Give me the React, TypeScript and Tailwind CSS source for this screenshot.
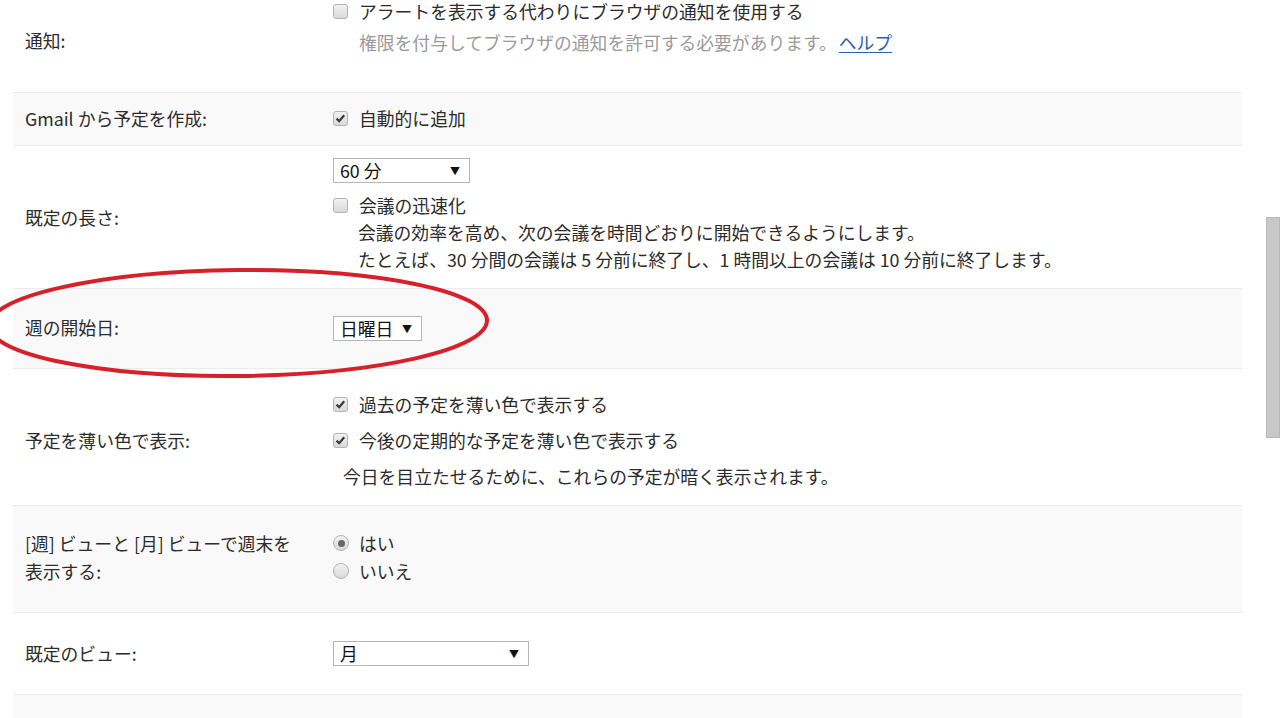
import React from 'react';

const font = { fontFamily: '"Noto Sans CJK JP", "Liberation Sans", sans-serif' };

const Checkbox: React.FC<{ checked?: boolean }> = ({ checked }) => (
  <span className="relative inline-block w-[15px] h-[15px] shrink-0 rounded-[3px] border border-[#b3b3b3] bg-gradient-to-b from-[#f2f2f2] to-[#d9d9d9]">
    {checked && (
      <svg viewBox="0 0 15 15" className="absolute -left-px -top-px w-[15px] h-[15px]">
        <path d="M3.6 7.6 L6.2 10.2 L11.2 4.2" fill="none" stroke="#3a3a3a" strokeWidth="2.2" />
      </svg>
    )}
  </span>
);

const Radio: React.FC<{ checked?: boolean }> = ({ checked }) => (
  <span className="inline-flex items-center justify-center w-[16px] h-[16px] shrink-0 rounded-full border border-[#b3b3b3] bg-gradient-to-b from-[#f2f2f2] to-[#d9d9d9]">
    {checked && <span className="w-[7px] h-[7px] rounded-full bg-[#666]" />}
  </span>
);

const Select: React.FC<{ label: string; width: string }> = ({ label, width }) => (
  <div className={`flex items-center justify-between h-[25px] ${width} border border-[#b5b5b5] bg-white pl-[6px] pr-[9px] text-[#111]`}>
    <span className="leading-[23px]">{label}</span>
    <span className="text-[10px] leading-none">▼</span>
  </div>
);

export default function App() {
  return (
    <div className="relative w-[1280px] h-[718px] overflow-hidden bg-white text-[17.8px] text-[#2b2b2b]" style={font}>
      <div className="ml-[13px] w-[1229px]">
        {/* 通知 */}
        <div className="flex h-[92px]">
          <div className="w-[320px] pl-[12px] pt-[27px] leading-[26px]">通知:</div>
          <div className="pt-px">
            <div className="flex items-center gap-[11px] leading-[20px]">
              <Checkbox />
              <span>アラートを表示する代わりにブラウザの通知を使用する</span>
            </div>
            <div className="mt-[8px] pl-[26px] leading-[26px] text-[#9a9a9a]">
              権限を付与してブラウザの通知を許可する必要があります。
              <a className="ml-[2px] text-[#2c5fae] underline underline-offset-2">ヘルプ</a>
            </div>
          </div>
        </div>

        {/* Gmail */}
        <div className="flex items-center h-[53px] border-t border-[#ebebeb] bg-[#f9f9f9]">
          <div className="w-[320px] pl-[12px] -mt-[2px]">Gmail から予定を作成:</div>
          <div className="flex items-center gap-[11px] -mt-[2px]">
            <Checkbox checked />
            <span>自動的に追加</span>
          </div>
        </div>

        {/* 既定の長さ */}
        <div className="flex items-center h-[143px] border-t border-[#ebebeb]">
          <div className="w-[320px] pl-[12px]">既定の長さ:</div>
          <div className="self-start pt-[12px]">
            <Select label="60 分" width="w-[137px]" />
            <div className="mt-[9px] leading-[27px]">
              <div className="flex items-center gap-[11px]">
                <Checkbox />
                <span>会議の迅速化</span>
              </div>
              <div className="pl-[25px]">会議の効率を高め、次の会議を時間どおりに開始できるようにします。</div>
              <div className="pl-[25px]">たとえば、30 分間の会議は 5 分前に終了し、1 時間以上の会議は 10 分前に終了します。</div>
            </div>
          </div>
        </div>

        {/* 週の開始日 */}
        <div className="flex items-center h-[80px] border-t border-[#ebebeb] bg-[#f9f9f9]">
          <div className="w-[320px] pl-[12px] -mt-[2px]">週の開始日:</div>
          <Select label="日曜日" width="w-[89px]" />
        </div>

        {/* 予定を薄い色で表示 */}
        <div className="flex h-[137px] border-t border-[#ebebeb]">
          <div className="w-[320px] pl-[12px] pt-[53px] leading-[36px]">予定を薄い色で表示:</div>
          <div className="pt-[17px] leading-[36px]">
            <div className="flex items-center gap-[11px]">
              <Checkbox checked />
              <span>過去の予定を薄い色で表示する</span>
            </div>
            <div className="flex items-center gap-[11px]">
              <Checkbox checked />
              <span>今後の定期的な予定を薄い色で表示する</span>
            </div>
            <div className="pl-[10px]">今日を目立たせるために、これらの予定が暗く表示されます。</div>
          </div>
        </div>

        {/* 週末 */}
        <div className="flex items-center h-[107px] border-t border-[#ebebeb] bg-[#f9f9f9]">
          <div className="w-[320px] pl-[12px] leading-[28px] -mt-[4px]">
            <div>[週] ビューと [月] ビューで週末を</div>
            <div>表示する:</div>
          </div>
          <div className="leading-[28px] -mt-[4px]">
            <div className="flex items-center gap-[10px]">
              <Radio checked />
              <span>はい</span>
            </div>
            <div className="flex items-center gap-[10px]">
              <Radio />
              <span>いいえ</span>
            </div>
          </div>
        </div>

        {/* 既定のビュー */}
        <div className="flex items-center h-[82px] border-t border-[#ebebeb]">
          <div className="w-[320px] pl-[12px] -mt-[1px]">既定のビュー:</div>
          <Select label="月" width="w-[196px]" />
        </div>

        <div className="h-[30px] border-t border-[#ebebeb] bg-[#f9f9f9]" />
      </div>

      {/* scrollbar */}
      <div className="absolute left-[1266px] top-[217px] w-[14px] h-[221px] bg-[#c8c8c8] border border-[#b8b8b8]" />

      {/* red annotation ellipse */}
      <svg className="absolute left-0 top-0 pointer-events-none" width="1280" height="718">
        <ellipse cx="238" cy="323" rx="249" ry="53" fill="none" stroke="#d6212a" strokeWidth="4" transform="rotate(-0.6 238 323)" />
      </svg>
    </div>
  );
}
